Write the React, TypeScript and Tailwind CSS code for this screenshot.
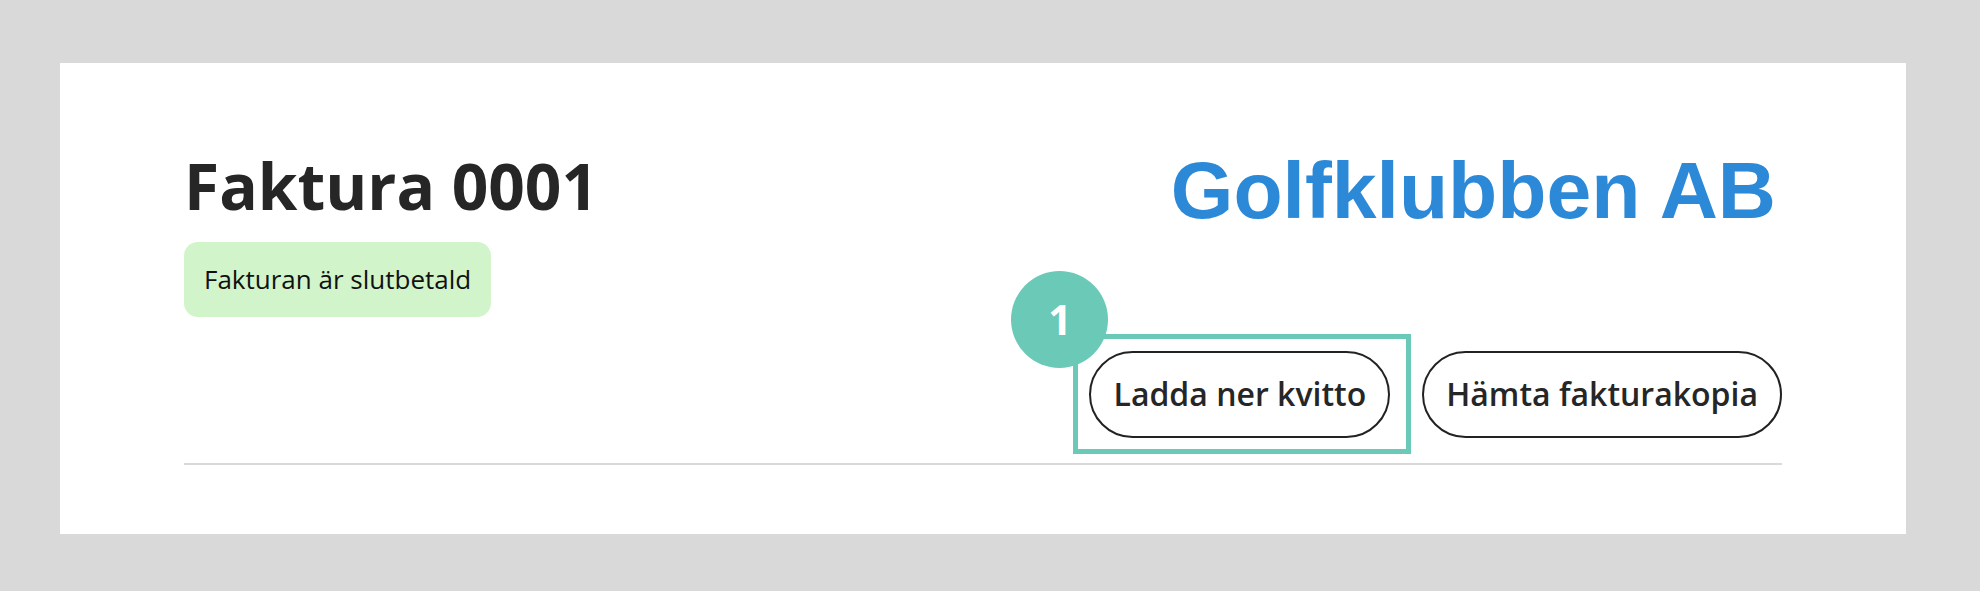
export default function App() {
  return (
    <div className="min-h-[591px] bg-[#d9d9d9] pt-[63px] pl-[60px]">
      <div className="w-[1846px] h-[471px] bg-white px-[124px] pt-[87px]">
        <div className="flex justify-between items-start">
          <div className="flex flex-col items-start">
            <h1 className="font-['Open_Sans',sans-serif] font-bold text-[64px] leading-none text-[#262626] mt-[4px]">
              Faktura 0001
            </h1>
            <div className="mt-[24px] h-[75px] px-[20px] flex items-center rounded-[14px] bg-[#d2f4cb] font-['Open_Sans',sans-serif] text-[26px] text-[#111]">
              Fakturan är slutbetald
            </div>
          </div>

          <div className="flex flex-col items-end">
            <div className="font-['Liberation_Sans',Arial,sans-serif] font-bold text-[80.5px] leading-none text-[#2c89d7] mr-[6px]">
              Golfklubben AB
            </div>
            <div className="mt-[120px] flex gap-[32px]">
              <div className="relative">
                <button className="h-[87px] px-[22px] rounded-full border-2 border-[#222] bg-white font-['Open_Sans',sans-serif] font-semibold text-[32px] text-[#262626]">
                  Ladda ner kvitto
                </button>
                {/* highlight annotation */}
                <div className="absolute -left-[16px] -top-[17px] -right-[21px] -bottom-[16px] border-[5px] border-[#6bcab7] pointer-events-none" />
                <div className="absolute -left-[78px] -top-[80px] w-[97px] h-[97px] rounded-full bg-[#6bcab7] flex items-center justify-center font-['Open_Sans',sans-serif] font-bold text-[41px] text-white leading-none">
                  1
                </div>
              </div>
              <button className="h-[87px] px-[22px] rounded-full border-2 border-[#222] bg-white font-['Open_Sans',sans-serif] font-semibold text-[32px] text-[#262626]">
                Hämta fakturakopia
              </button>
            </div>
          </div>
        </div>

        <div className="mt-[25px] border-t-2 border-[#d9d9d9]" />
      </div>
    </div>
  );
}
